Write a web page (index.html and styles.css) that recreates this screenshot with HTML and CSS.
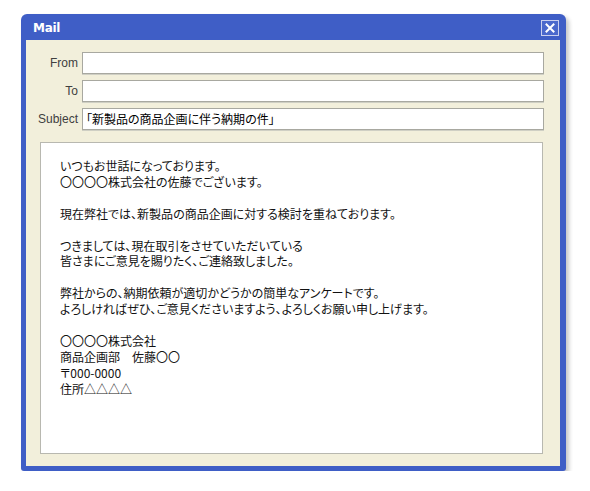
FILE: index.html
```html
<!DOCTYPE html>
<html lang="ja">
<head>
<meta charset="utf-8">
<title>Mail</title>
<link rel="stylesheet" href="styles.css">
</head>
<body>
<div class="window">
  <div class="titlebar">
    <span class="title">Mail</span>
    <span class="close">
      <svg width="10" height="10" viewBox="0 0 10 10"><path d="M1.5 1.5 L8.5 8.5 M8.5 1.5 L1.5 8.5" stroke="#fff" stroke-width="2" stroke-linecap="square"/></svg>
    </span>
  </div>
  <div class="content">
    <div class="form">
      <label class="label">From</label>
      <div class="field"></div>
      <label class="label">To</label>
      <div class="field"></div>
      <label class="label">Subject</label>
      <div class="field">「新製品の商品企画に伴う納期の件」</div>
    </div>
    <div class="body">
      <p>いつもお世話になっております。<br>〇〇〇〇株式会社の佐藤でございます。</p>
      <p>現在弊社では、新製品の商品企画に対する検討を重ねております。</p>
      <p>つきましては、現在取引をさせていただいている<br>皆さまにご意見を賜りたく、ご連絡致しました。</p>
      <p>弊社からの、納期依頼が適切かどうかの簡単なアンケートです。<br>よろしければぜひ、ご意見くださいますよう、よろしくお願い申し上げます。</p>
      <p>〇〇〇〇株式会社<br>商品企画部　佐藤〇〇<br>〒000-0000<br>住所△△△△</p>
    </div>
  </div>
</div>
</body>
</html>
```
FILE: styles.css
```css
html, body {
  margin: 0;
  padding: 0;
  background: #ffffff;
}
body {
  padding: 14px 0 0 21px;
}
.window {
  width: 545px;
  height: 457px;
  box-sizing: border-box;
  background: #3f5ec6;
  border-radius: 6px 6px 3px 3px;
  box-shadow: 3px 3px 4px rgba(0, 0, 0, 0.22);
  display: flex;
  flex-direction: column;
  padding: 0 6px 5px 5px;
}
.titlebar {
  height: 26px;
  display: flex;
  align-items: center;
  justify-content: space-between;
  padding: 0 1px 0 7px;
  flex: none;
}
.title {
  color: #ffffff;
  font-family: "DejaVu Sans", sans-serif;
  font-weight: bold;
  font-size: 12px;
  letter-spacing: -0.3px;
  margin-top: 1px;
}
.close {
  width: 18px;
  height: 16px;
  box-sizing: border-box;
  border: 1px solid #c9cfee;
  background: #4a68cc;
  display: flex;
  align-items: center;
  justify-content: center;
  margin-top: 1px;
}
.content {
  flex: 1;
  background: #f2efdb;
  padding: 12px 16px 12px 14px;
  display: flex;
  flex-direction: column;
  gap: 12px;
}
.form {
  display: grid;
  grid-template-columns: 38px 1fr;
  column-gap: 4px;
  row-gap: 6px;
}
.label {
  font-family: "Liberation Sans", Arial, sans-serif;
  font-size: 12px;
  color: #404040;
  text-align: right;
  line-height: 22px;
  white-space: nowrap;
  direction: rtl;
}
.field {
  height: 22px;
  box-sizing: border-box;
  background: #ffffff;
  border: 1px solid #a8a8a0;
  box-shadow: 0 1px 0 #cfcfc4;
  font-family: "Noto Sans CJK JP", sans-serif;
  font-feature-settings: "palt";
  font-size: 12px;
  line-height: 20px;
  padding-left: 3px;
  color: #000;
}
.body {
  flex: 1;
  margin-right: 1px;
  background: #ffffff;
  border: 1px solid #b8b8b0;
  padding: 15px 20px 0 19px;
  font-family: "Noto Sans CJK JP", sans-serif;
  font-feature-settings: "palt";
  font-size: 12px;
  line-height: 15.9px;
  color: #111;
}
.body p {
  margin: 0 0 15.9px 0;
}
```
